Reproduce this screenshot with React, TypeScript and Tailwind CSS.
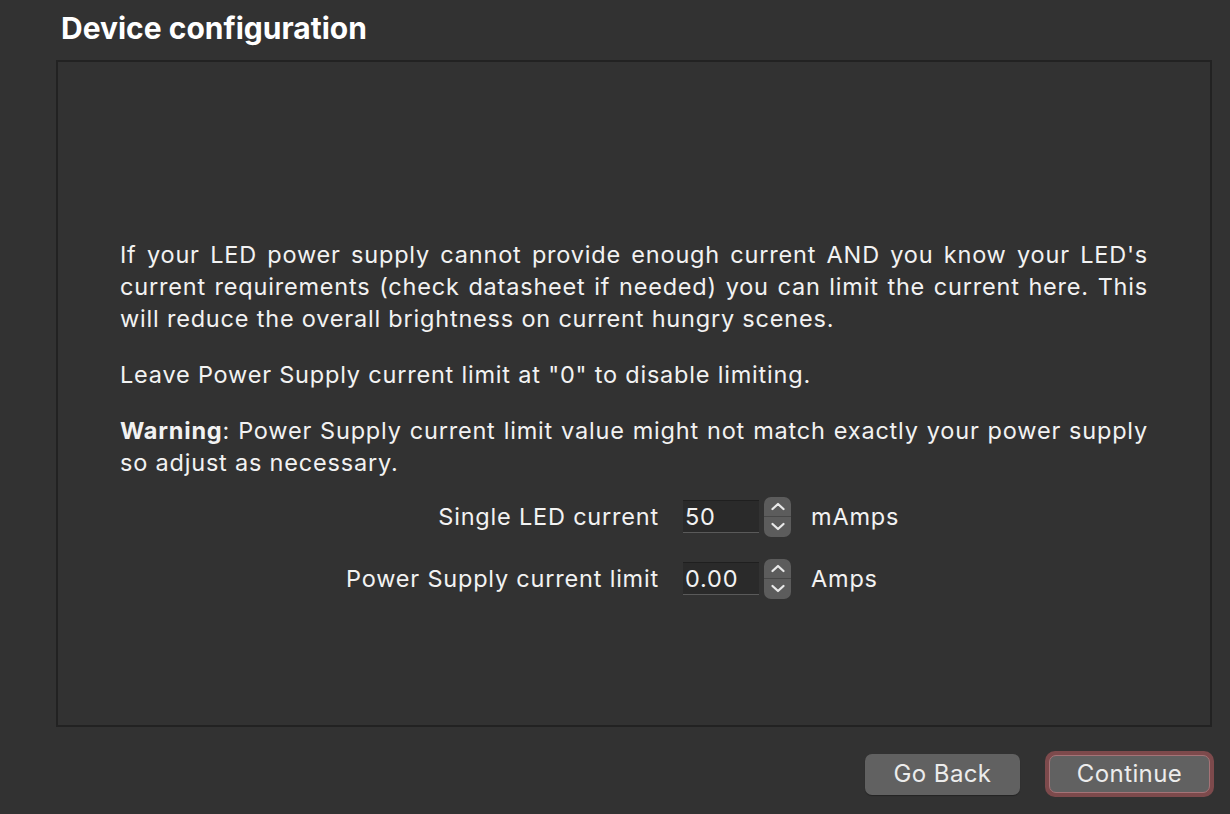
function Chevron({ up }: { up?: boolean }) {
  return (
    <svg width="16" height="11" viewBox="0 0 16 11" fill="none">
      <polyline
        points={up ? '2.5,8 8,3 13.5,8' : '2.5,3 8,8 13.5,3'}
        stroke="#e8e8e8"
        strokeWidth="2.3"
        strokeLinecap="round"
        strokeLinejoin="round"
      />
    </svg>
  )
}

function Stepper() {
  return (
    <div className="flex flex-col w-[27px] h-[40px] rounded-[7px] bg-[#5c5c5c] overflow-hidden">
      <div className="flex-1 flex items-center justify-center border-b border-[#474747]">
        <Chevron up />
      </div>
      <div className="flex-1 flex items-center justify-center">
        <Chevron />
      </div>
    </div>
  )
}

function FieldRow({ label, value, unit }: { label: string; value: string; unit: string }) {
  return (
    <div className="flex items-center">
      <span className="w-[625px] text-right pr-[24px]">{label}</span>
      <div className="w-[76px] h-[33px] bg-[#2a2a2a] border-t border-[#1f1f1f] border-b border-b-[#5a5a5a] flex items-center px-[2px]">
        {value}
      </div>
      <div className="ml-[5px]">
        <Stepper />
      </div>
      <span className="ml-[20px]">{unit}</span>
    </div>
  )
}

export default function App() {
  return (
    <div
      className="w-[1230px] h-[814px] bg-[#323232] text-white overflow-hidden"
      style={{ fontFamily: 'Inter, "Noto Sans", sans-serif' }}
    >
      <h1 className="pl-[61px] pt-[9px] h-[60px] text-[30px] font-bold tracking-[0px] leading-[38px]">
        Device configuration
      </h1>

      <div className="ml-[56px] w-[1156px] h-[667px] border-2 border-[#222222] flex flex-col justify-center pl-[62px] pr-[62px] pt-[50px] text-[23.5px] tracking-[0.8px] text-[#f2f2f2]">
        <p className="text-justify leading-[32px]">
          If your LED power supply cannot provide enough current AND you know your LED's current requirements (check datasheet if needed) you can limit the current here. This will reduce the overall brightness on current hungry scenes.
        </p>
        <p className="mt-[24px] leading-[32px]">Leave Power Supply current limit at "0" to disable limiting.</p>
        <p className="mt-[24px] leading-[32px] text-justify">
          <span className="font-bold">Warning</span>: Power Supply current limit value might not match exactly your power supply so adjust as necessary.
        </p>
        <div className="mt-[18px] -ml-[62px] flex flex-col gap-[22px]">
          <FieldRow label="Single LED current" value="50" unit="mAmps" />
          <FieldRow label="Power Supply current limit" value="0.00" unit="Amps" />
        </div>
      </div>

      <div className="flex justify-end items-center gap-[25px] pr-[16px] pt-[24px] text-[24px] tracking-[0.4px] text-[#ececec]">
        <button className="w-[155px] h-[41px] rounded-[7px] bg-[#616161] shadow-[0_1px_1px_rgba(0,0,0,0.3)]">
          Go Back
        </button>
        <div className="rounded-[10px] p-[4px] bg-[#7d4a4c]">
          <button className="w-[161px] h-[38px] rounded-[7px] bg-[#616161] border border-[#a57377]">
            Continue
          </button>
        </div>
      </div>
    </div>
  )
}
